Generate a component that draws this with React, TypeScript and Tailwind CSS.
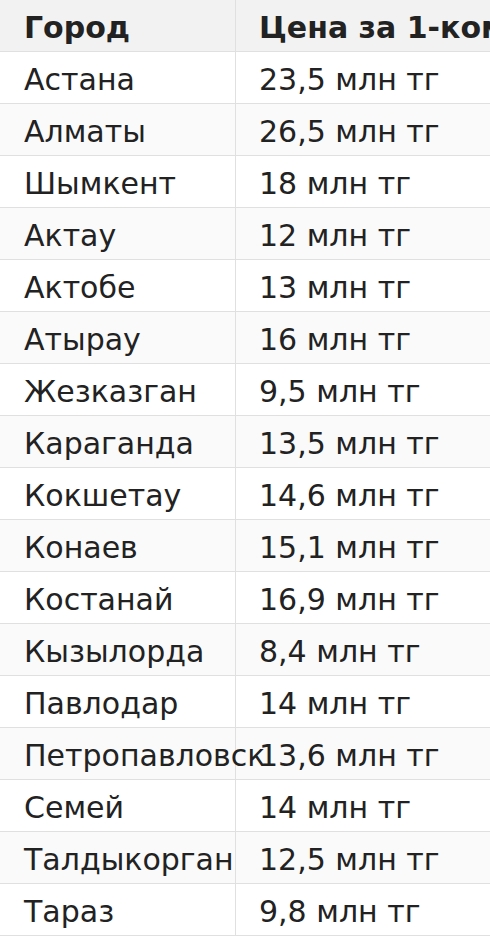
import React from "react";

const rows: [string, string][] = [
  ["Астана", "23,5 млн тг"],
  ["Алматы", "26,5 млн тг"],
  ["Шымкент", "18 млн тг"],
  ["Актау", "12 млн тг"],
  ["Актобе", "13 млн тг"],
  ["Атырау", "16 млн тг"],
  ["Жезказган", "9,5 млн тг"],
  ["Караганда", "13,5 млн тг"],
  ["Кокшетау", "14,6 млн тг"],
  ["Конаев", "15,1 млн тг"],
  ["Костанай", "16,9 млн тг"],
  ["Кызылорда", "8,4 млн тг"],
  ["Павлодар", "14 млн тг"],
  ["Петропавловск", "13,6 млн тг"],
  ["Семей", "14 млн тг"],
  ["Талдыкорган", "12,5 млн тг"],
  ["Тараз", "9,8 млн тг"],
];

export default function App() {
  return (
    <div
      className="w-[490px] h-[936px] overflow-hidden bg-white text-[#222222] text-[30px]"
      style={{ fontFamily: '"DejaVu Sans", sans-serif' }}
    >
      <div className="grid grid-cols-[236px_600px] h-[52px] bg-[#f2f2f2] border-b border-[#e0e0e0] font-bold">
        <div className="border-r border-[#e0e0e0] pl-[24px] pt-[3px] flex items-center whitespace-nowrap">Город</div>
        <div className="pl-[23px] pt-[3px] flex items-center whitespace-nowrap">Цена за 1-комнатную квартиру</div>
      </div>
      {rows.map(([city, price], i) => (
        <div
          key={city}
          className={`grid grid-cols-[236px_600px] h-[52px] border-b border-[#e0e0e0] ${
            i % 2 === 1 ? "bg-[#fafafa]" : "bg-white"
          }`}
        >
          <div className="border-r border-[#e0e0e0] pl-[24px] pt-[3px] flex items-center whitespace-nowrap">{city}</div>
          <div className="pl-[23px] pt-[3px] flex items-center whitespace-nowrap">{price}</div>
        </div>
      ))}
    </div>
  );
}
